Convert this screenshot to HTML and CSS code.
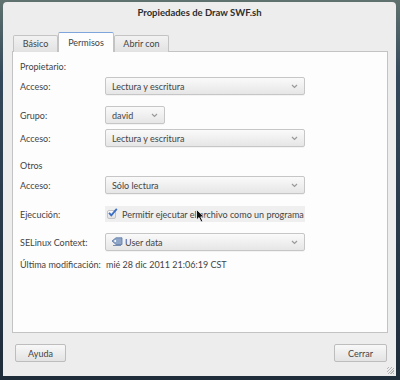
FILE: index.html
```html
<!DOCTYPE html>
<html lang="es">
<head>
<meta charset="utf-8">
<title>Propiedades de Draw SWF.sh</title>
<link rel="stylesheet" href="styles.css">
</head>
<body>
<div class="window">
  <div class="titlebar">Propiedades de Draw SWF.sh</div>
  <div class="tabs">
    <div class="tab t1">Básico</div>
    <div class="tab t2 active">Permisos</div>
    <div class="tab t3">Abrir con</div>
  </div>
  <div class="panel">
    <div class="section">Propietario:</div>
    <div class="row r1">
      <span class="label">Acceso:</span>
      <div class="combo wide"><span>Lectura y escritura</span><svg class="chev" width="7" height="5" viewBox="0 0 7 5"><path d="M1 1 L3.5 3.5 L6 1" fill="none" stroke="#9a9a9a" stroke-width="1.2"/></svg></div>
    </div>
    <div class="row r2">
      <span class="label">Grupo:</span>
      <div class="combo narrow"><span>david</span><svg class="chev" width="7" height="5" viewBox="0 0 7 5"><path d="M1 1 L3.5 3.5 L6 1" fill="none" stroke="#9a9a9a" stroke-width="1.2"/></svg></div>
    </div>
    <div class="row r3">
      <span class="label">Acceso:</span>
      <div class="combo wide"><span>Lectura y escritura</span><svg class="chev" width="7" height="5" viewBox="0 0 7 5"><path d="M1 1 L3.5 3.5 L6 1" fill="none" stroke="#9a9a9a" stroke-width="1.2"/></svg></div>
    </div>
    <div class="section s2">Otros</div>
    <div class="row r4">
      <span class="label">Acceso:</span>
      <div class="combo wide"><span>Sólo lectura</span><svg class="chev" width="7" height="5" viewBox="0 0 7 5"><path d="M1 1 L3.5 3.5 L6 1" fill="none" stroke="#9a9a9a" stroke-width="1.2"/></svg></div>
    </div>
    <div class="row r5">
      <span class="label">Ejecución:</span>
      <div class="check">
        <span class="box"><svg width="11" height="10" viewBox="0 0 11 10"><path d="M2 4.8 L4.3 7.4 L9.8 0.8" fill="none" stroke="#3b6fc4" stroke-width="1.8"/></svg></span>
        <span class="ctext">Permitir ejecutar el archivo como un programa</span>
        <svg class="cursor" width="10" height="14" viewBox="0 0 10 14"><path d="M0.5 0.5 L0.5 11 L3 8.6 L5 13 L6.8 12.2 L4.8 7.9 L8.3 7.9 Z" fill="#111" stroke="#fff" stroke-width="0.8"/></svg>
      </div>
    </div>
    <div class="row r6">
      <span class="label">SELinux Context:</span>
      <div class="combo wide"><span class="ic"><svg width="12" height="10" viewBox="0 0 12 10"><path d="M1 4 L5 0.8 L11 0.8 L11 7.5 L5 7.5 Z" fill="#8fa6c8" stroke="#5a77a3" stroke-width="0.8"/><circle cx="4.2" cy="4.1" r="1" fill="#fff"/><path d="M2 8.5 L10 8.5" stroke="#7a8fb0" stroke-width="1"/></svg></span><span>User data</span><svg class="chev" width="7" height="5" viewBox="0 0 7 5"><path d="M1 1 L3.5 3.5 L6 1" fill="none" stroke="#9a9a9a" stroke-width="1.2"/></svg></div>
    </div>
    <div class="row r7">
      <span class="label">Última modificación:</span>
      <span class="value">mié 28 dic 2011 21:06:19 CST</span>
    </div>
  </div>
  <div class="buttons">
    <div class="btn b1">Ayuda</div>
    <div class="btn b2">Cerrar</div>
  </div>
  <div class="grip"></div>
</div>
</body>
</html>
```

FILE: styles.css
```css
html, body {
  margin: 0;
  padding: 0;
}
body {
  width: 400px;
  height: 380px;
  overflow: hidden;
  background: linear-gradient(180deg, #5f726f 0%, #33485a 20%, #1f2c3a 100%);
  font-family: "Lato", "DejaVu Sans", sans-serif;
  font-size: 9px;
  color: #444;
  white-space: nowrap;
}
.window {
  position: relative;
  margin: 2px 0 0 3px;
  width: 393px;
  height: 374px;
  background: #ededed;
  border-radius: 4px 4px 0 0;
  display: flex;
  flex-direction: column;
  box-sizing: border-box;
}
.titlebar {
  height: 22px;
  line-height: 22px;
  text-align: center;
  font-weight: bold;
  color: #2e2e2e;
  font-size: 9.5px;
}
.tabs {
  display: flex;
  align-items: flex-end;
  height: 28px;
  padding-left: 10px;
  position: relative;
  z-index: 1;
  margin-bottom: -1px;
}
.tab {
  height: 17px;
  line-height: 16px;
  box-sizing: border-box;
  border: 1px solid #c3c3c3;
  border-bottom: none;
  background: linear-gradient(180deg, #f2f2f2, #e2e2e2);
  border-radius: 2px 2px 0 0;
  text-align: center;
}
.t1 { width: 45px; }
.t2 { width: 56px; }
.t3 { width: 55px; }
.tab.active {
  height: 20px;
  line-height: 19px;
  background: #fdfdfd;
  border-top: 1px solid #7fa6dc;
}
.panel {
  margin: 0 8px 0 9px;
  height: 282px;
  box-sizing: border-box;
  border: 1px solid #c3c3c3;
  background: #fdfdfd;
  padding: 8px 7px;
  display: flex;
  flex-direction: column;
}
.section {
  height: 14px;
  line-height: 14px;
}
.s2 { margin-top: 12px; }
.row {
  display: flex;
  align-items: center;
  height: 18px;
}
.r1 { margin-top: 3px; }
.r2 { margin-top: 11px; }
.r3 { margin-top: 5px; }
.r4 { margin-top: 3px; }
.r5 { margin-top: 12px; height: 16px; }
.r6 { margin-top: 11px; }
.r7 { margin-top: 6px; height: 14px; }
.label {
  width: 85px;
  flex: none;
}
.combo {
  height: 18px;
  box-sizing: border-box;
  border: 1px solid #c6c6c6;
  border-radius: 2px;
  background: linear-gradient(180deg, #fafafa 0%, #e6e6e6 100%);
  display: flex;
  align-items: center;
  padding: 0 6px;
  box-shadow: 0 1px 0 rgba(0,0,0,0.04);
}
.combo.wide { width: 200px; }
.combo.narrow { width: 60px; }
.chev {
  margin-left: auto;
}
.ic {
  display: inline-flex;
  margin-right: 2px;
  margin-left: -1px;
}
.check {
  position: relative;
  display: flex;
  align-items: center;
  height: 16px;
  width: 200px;
  background: #efefef;
  padding-left: 2px;
  box-sizing: border-box;
}
.box {
  position: relative;
  width: 9px;
  height: 9px;
  box-sizing: border-box;
  border: 1px solid #c4c4c4;
  border-radius: 2px;
  background: linear-gradient(180deg, #fafafa, #e2e2e2);
  margin-right: 6px;
}
.box svg {
  position: absolute;
  left: -1px;
  top: -3px;
}
.cursor {
  position: absolute;
  left: 91px;
  top: 3px;
}
.value {
  padding-left: 1px;
}
.buttons {
  display: flex;
  justify-content: space-between;
  padding: 11px 9px 0 12px;
}
.btn {
  height: 18px;
  line-height: 17px;
  box-sizing: border-box;
  text-align: center;
  border: 1px solid #bdbdbd;
  border-radius: 2px;
  background: linear-gradient(180deg, #f8f8f8, #e3e3e3);
}
.b1 { width: 51px; }
.b2 { width: 53px; }
.grip {
  position: absolute;
  right: 2px;
  bottom: 2px;
  width: 7px;
  height: 7px;
  background: repeating-linear-gradient(135deg, transparent 0 1px, #b5b5b5 1px 2px);
}
```
